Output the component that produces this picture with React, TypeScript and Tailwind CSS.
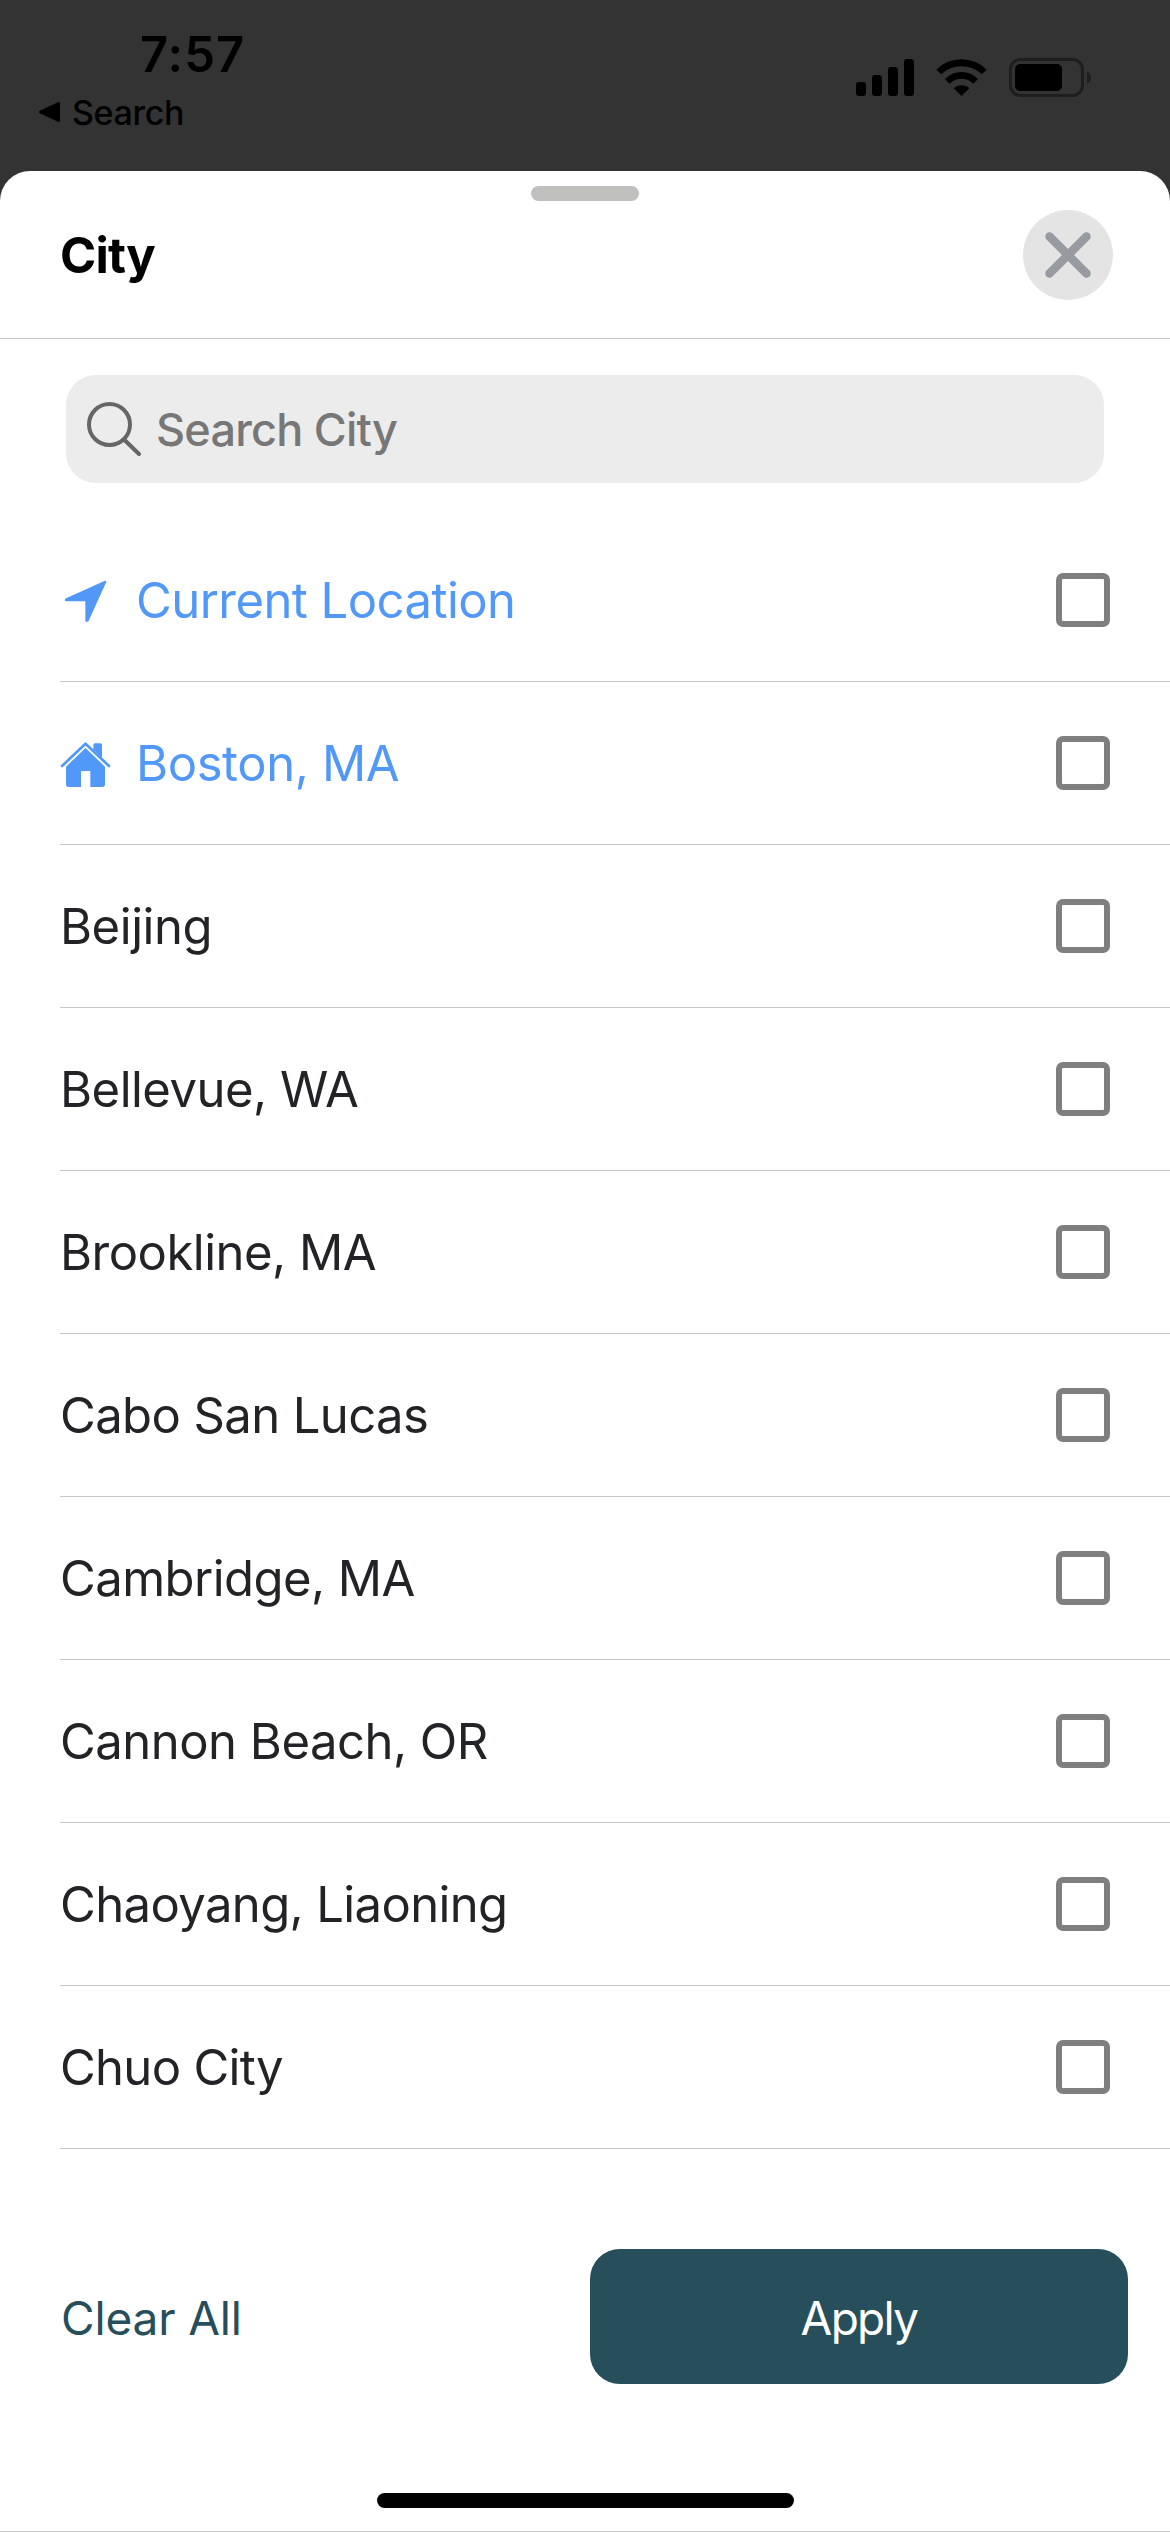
type City = { name: string; icon?: "location" | "home"; tracking: string };

const cities: City[] = [
  { name: "Current Location", icon: "location", tracking: "tracking-[-0.55px]" },
  { name: "Boston, MA", icon: "home", tracking: "tracking-[-0.4px]" },
  { name: "Beijing", tracking: "tracking-[-0.45px]" },
  { name: "Bellevue, WA", tracking: "tracking-[-0.5px]" },
  { name: "Brookline, MA", tracking: "tracking-[-0.5px]" },
  { name: "Cabo San Lucas", tracking: "tracking-[-0.6px]" },
  { name: "Cambridge, MA", tracking: "tracking-[-0.55px]" },
  { name: "Cannon Beach, OR", tracking: "tracking-[-0.5px]" },
  { name: "Chaoyang, Liaoning", tracking: "tracking-[-0.62px]" },
  { name: "Chuo City", tracking: "tracking-[-0.7px]" },
];

function LocationIcon() {
  return (
    <svg width="49" height="48" viewBox="60 648 147 144" fill="#5198f9" stroke="#5198f9" strokeWidth="6" strokeLinejoin="round">
      <path d="M196 665 L78 718 V721 H139 V782 H143 Z" />
    </svg>
  );
}

function HomeIcon() {
  return (
    <svg width="49" height="48" className="overflow-visible" viewBox="60 147 147 144" fill="#5198f9">
      <path d="M66 228 L136.500 161 L207 228" fill="none" stroke="#5198f9" strokeWidth="8" strokeLinejoin="round" strokeLinecap="round" />
      <path d="M160 178 V165 Q160 160 165 160 H181 Q186 160 186 165 V204 Z" />
      <path d="M136.500 174 L195 230 V283 Q195 291 187 291 H151 V243 H123 V291 H86 Q78 291 78 283 V230 Z" />
    </svg>
  );
}

function StatusBar() {
  return (
    <div className="flex h-[171px] justify-between bg-[#333333] text-black">
      <div className="flex flex-col pl-[38px] pt-[25px]">
        <div className="pl-[102px] text-[49px] font-semibold leading-[60px] tracking-[1px]">7:57</div>
        <div className="mt-[6px] flex items-center gap-[11px]">
          <svg width="23" height="22" viewBox="0 0 23 22" stroke="black" strokeWidth="3" strokeLinejoin="round">
            <path d="M2.500 11 L20.500 2.500 V19.500 Z" />
          </svg>
          <span className="pt-[2px] text-[34px] font-medium leading-[40px] tracking-[-0.35px]">Search</span>
        </div>
      </div>
      <div className="mt-[58px] flex h-[39px] items-center pr-[79px]">
        <svg width="58" height="37" viewBox="0 0 58 37">
          <rect x="0" y="23" width="10" height="14" rx="3" />
          <rect x="16" y="16" width="10" height="21" rx="3" />
          <rect x="32" y="8" width="10" height="29" rx="3" />
          <rect x="48" y="0" width="10" height="37" rx="3" />
        </svg>
        <svg className="ml-[22px]" width="51" height="37" viewBox="348 177 153 111">
          <path d="M349 209 A106 106 0 0 1 500 209 L485 223 A87 87 0 0 0 364 223 Z" />
          <path d="M375 237 A69 69 0 0 1 474 237 L460 251 A51 51 0 0 0 389 251 Z" />
          <path d="M401 265 A34 34 0 0 1 448 265 L424.500 288 Z" />
        </svg>
        <svg className="ml-[22px]" width="82" height="39" viewBox="0 0 82 39">
          <rect x="1.500" y="1.500" width="72" height="36" rx="10" fill="none" stroke="#1e1e1e" strokeWidth="3" />
          <rect x="6" y="6" width="47" height="27" rx="5" />
          <path d="M78 13.500 Q82 15.500 82 19.500 Q82 23.500 78 25.500 Z" fill="#1e1e1e" />
        </svg>
      </div>
    </div>
  );
}

export default function App() {
  return (
    <div className="h-[2532px] w-[1170px] overflow-hidden bg-[#333333] font-['Inter',sans-serif]">
      <StatusBar />
      <div className="flex h-[2361px] flex-col rounded-t-[30px] bg-white pt-[15px]">
        <div className="h-[15px] w-[108px] self-center rounded-full bg-[#c0c0be]" />
        <div className="flex h-[138px] items-start justify-between border-b border-[#c8c8cb] pl-[60px] pr-[57px] pt-[9px]">
          <h1 className="pt-px text-[49px] font-bold leading-[90px] tracking-[-0.8px] text-black">City</h1>
          <button className="flex size-[90px] items-center justify-center rounded-full bg-[#e4e4e4]">
            <svg width="46" height="46" viewBox="0 0 46 46" stroke="#989aa1" strokeWidth="8.500" strokeLinecap="round">
              <path d="M4.500 4.500 L41.500 41.500 M41.500 4.500 L4.500 41.500" />
            </svg>
          </button>
        </div>
        <div className="mx-[66px] mt-9 flex h-[108px] shrink-0 items-center rounded-[30px] bg-[#ececec] pl-[20px]">
          <svg width="56" height="56" viewBox="0 0 56 56" fill="none" stroke="#666666" strokeWidth="4" strokeLinecap="round">
            <circle cx="23.500" cy="23.500" r="20.500" />
            <path d="M38 38.500 L53 53" />
          </svg>
          <span className="ml-[14px] pt-[2px] text-[45px] font-medium leading-[60px] tracking-[-0.77px] text-[#777777]">Search City</span>
        </div>
        <ul className="ml-[60px] mt-9">
          {cities.map((c) => (
            <li key={c.name} className="flex h-[163px] items-center justify-between border-b border-[#c8c8cb] pr-[60px]">
              <div className={c.icon ? "flex items-center gap-[27px] text-[#5198f9]" : "flex items-center text-[#222326]"}>
                {c.icon === "location" && <LocationIcon />}
                {c.icon === "home" && <HomeIcon />}
                <span className={`pt-[2px] text-[49px] leading-[60px] ${c.tracking}`}>{c.name}</span>
              </div>
              <span className="size-[54px] rounded-[7px] border-[6px] border-[#7f7f7f]" />
            </li>
          ))}
        </ul>
        <div className="mt-[100px] flex h-[135px] items-center justify-between pl-[61px] pr-[42px] text-[46px] leading-[60px]">
          <button className="pt-[2px] tracking-[-0.15px] text-[#264e5b]">Clear All</button>
          <button className="h-[135px] w-[538px] rounded-[30px] bg-[#264e5b] pt-[2px] tracking-[-1.7px] text-white">Apply</button>
        </div>
        <div className="mt-[109px] h-[15px] w-[417px] self-center rounded-full bg-black" />
        <div className="mt-[23px] h-px bg-[#c8c8cb]" />
      </div>
    </div>
  );
}
